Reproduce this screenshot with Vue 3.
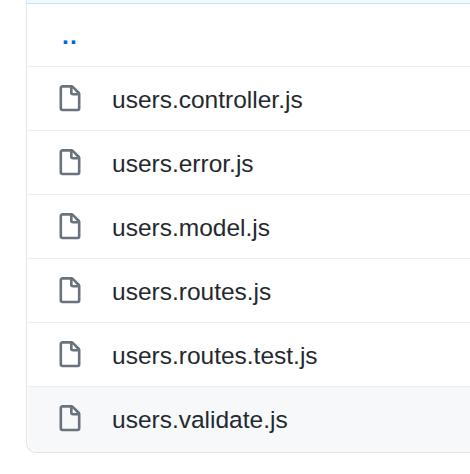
<script setup>
const files = [
  'users.controller.js',
  'users.error.js',
  'users.model.js',
  'users.routes.js',
  'users.routes.test.js',
  'users.validate.js',
]
const active = 'users.validate.js'
</script>

<template>
  <main class="page">
    <div class="box">
      <div class="header"></div>
      <div class="row parent"><a class="up">..</a></div>
      <div v-for="name in files" :key="name" class="row" :class="{ active: name === active }">
        <svg class="icon" viewBox="0 0 16 16" width="28" height="28" aria-hidden="true">
          <path fill-rule="evenodd" d="M3.75 1.5a.25.25 0 00-.25.25v11.5c0 .138.112.25.25.25h8.5a.25.25 0 00.25-.25V6H9.75A1.75 1.75 0 018 4.25V1.5H3.75zm5.75.56v2.19c0 .138.112.25.25.25h2.19L9.5 2.06zM2 1.75C2 .784 2.784 0 3.75 0h5.086c.464 0 .909.184 1.237.513l3.414 3.414c.329.328.513.773.513 1.237v8.086A1.75 1.75 0 0112.25 15h-8.5A1.75 1.75 0 012 13.25V1.75z" />
        </svg>
        <span class="name">{{ name }}</span>
      </div>
    </div>
  </main>
</template>

<style>
body {
  background: #fff;
}
</style>

<style scoped>
.page {
  box-sizing: border-box;
  height: 474px;
  padding-left: 26px;
  overflow: hidden;
  font-family: "Liberation Sans", Arial, sans-serif;
  font-size: 24.5px;
  color: #24292e;
}
.box {
  box-sizing: border-box;
  height: 453px;
  border-left: 1px solid #e1e4e8;
  border-bottom: 1px solid #e1e4e8;
  border-bottom-left-radius: 10px;
  overflow: hidden;
}
.header {
  box-sizing: border-box;
  height: 4px;
  background: #f1f8ff;
  border-bottom: 1px solid #c8e1ff;
}
.row {
  box-sizing: border-box;
  display: flex;
  align-items: center;
  height: 64px;
  margin-left: 1px;
  padding: 1px 28px 0;
  border-top: 1px solid #eaecef;
}
.parent {
  height: 62px;
  padding: 2px 34px 0;
  border-top: 0;
}
.up {
  color: #0366d6;
  font-weight: 600;
  line-height: 60px;
  letter-spacing: 1.3px;
}
.active {
  height: 66px;
  padding-bottom: 2px;
  background: #f6f8fa;
  border-bottom-left-radius: 9px;
}
.icon {
  flex: none;
  margin-right: 28px;
  fill: #6a737d;
}
.name {
  line-height: 36px;
  padding-top: 2px;
  white-space: nowrap;
}
</style>
